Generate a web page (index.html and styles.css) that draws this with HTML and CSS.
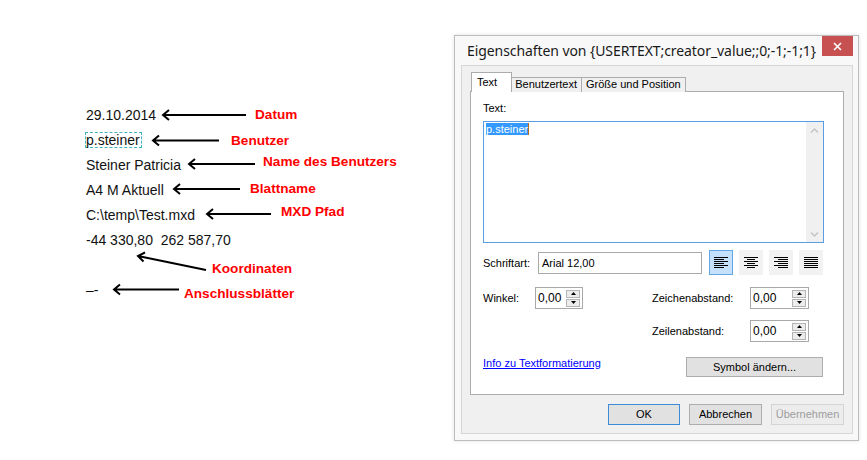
FILE: index.html
```html
<!DOCTYPE html>
<html lang="de">
<head>
  <meta charset="UTF-8">
  <title>Eigenschaften von USERTEXT</title>
  <link rel="stylesheet" href="styles.css">
</head>
<body>
  <div class="page">
    <div class="notes">
      <div class="row">29.10.2014</div>
      <div class="row"><span class="focus">p.steiner</span></div>
      <div class="row">Steiner Patricia</div>
      <div class="row">A4 M Aktuell</div>
      <div class="row">C:\temp\Test.mxd</div>
      <div class="row">-44 330,80&nbsp; 262 587,70</div>
      <div class="row"></div>
      <div class="row">–-</div>

      <svg class="arrows" width="454" height="460" viewBox="0 0 454 460">
        <g fill="none" stroke="#000" stroke-width="2">
          <path d="M246 115H163M169 110l-6 5 6 5"/>
          <path d="M219 140.5H153M159 135.5l-6 5 6 5"/>
          <path d="M255 164H189M195 159l-6 5 6 5"/>
          <path d="M240 189H174M180 184l-6 5 6 5"/>
          <path d="M271 214H207M213 209l-6 5 6 5"/>
          <path d="M206 270L138 256M145 252.5l-7 3.5 5.5 5.5"/>
          <path d="M179 289.5H114M120 284.5l-6 5 6 5"/>
        </g>
      </svg>
      <span class="tag tag-datum">Datum</span>
      <span class="tag tag-user">Benutzer</span>
      <span class="tag tag-name">Name des Benutzers</span>
      <span class="tag tag-sheet">Blattname</span>
      <span class="tag tag-mxd">MXD Pfad</span>
      <span class="tag tag-coords">Koordinaten</span>
      <span class="tag tag-link">Anschlussblätter</span>
    </div>

    <div class="dialog">
      <div class="titlebar">
        <span class="title">Eigenschaften von {USERTEXT;creator_value;;0;-1;-1;1}</span>
        <div class="close">
          <svg width="9" height="9" viewBox="0 0 9 9"><path d="M1 1l7 7M8 1L1 8" stroke="#fff" stroke-width="1.6"/></svg>
        </div>
      </div>
      <div class="client">
        <div class="tabs">
          <div class="tab active">Text</div>
          <div class="tab">Benutzertext</div>
          <div class="tab">Größe und Position</div>
        </div>
        <div class="panel">
          <div class="caption">Text:</div>
          <div class="textbox">
            <div class="textbox-content"><span class="selected">p.steiner</span></div>
            <div class="vscroll">
              <svg width="9" height="5" viewBox="0 0 9 5"><path d="M1 4.5l3.5-3.5 3.5 3.5" fill="none" stroke="#c2c2c2" stroke-width="1.4"/></svg>
              <svg width="9" height="5" viewBox="0 0 9 5"><path d="M1 .5l3.5 3.5 3.5-3.5" fill="none" stroke="#c2c2c2" stroke-width="1.4"/></svg>
            </div>
          </div>

          <div class="font-row">
            <span class="label label-font">Schriftart:</span>
            <div class="field font-field">Arial 12,00</div>
            <div class="align-buttons">
              <div class="align-btn active">
                <svg width="14" height="11" viewBox="0 0 14 11"><path d="M0 .5h14M0 2.5h10M0 4.5h14M0 6.5h10M0 8.5h14M0 10.5h10" stroke="#000"/></svg>
              </div>
              <div class="align-btn">
                <svg width="14" height="11" viewBox="0 0 14 11"><path d="M0 .5h14M3 2.5h8M0 4.5h14M3 6.5h8M0 8.5h14M3 10.5h8" stroke="#000"/></svg>
              </div>
              <div class="align-btn">
                <svg width="14" height="11" viewBox="0 0 14 11"><path d="M0 .5h14M4 2.5h10M0 4.5h14M4 6.5h10M0 8.5h14M4 10.5h10" stroke="#000"/></svg>
              </div>
              <div class="align-btn">
                <svg width="14" height="11" viewBox="0 0 14 11"><path d="M0 .5h14M0 2.5h14M0 4.5h14M0 6.5h14M0 8.5h14M0 10.5h14" stroke="#000"/></svg>
              </div>
            </div>
          </div>

          <div class="spin-row">
            <span class="label label-angle">Winkel:</span>
            <div class="spinner spinner-short">
              <span class="spin-value">0,00</span>
              <div class="spin-buttons">
                <div class="spin-btn"><svg width="5" height="3" viewBox="0 0 5 3"><path d="M0 3h5L2.5 0z"/></svg></div>
                <div class="spin-btn"><svg width="5" height="3" viewBox="0 0 5 3"><path d="M0 0h5L2.5 3z"/></svg></div>
              </div>
            </div>
            <span class="label label-char">Zeichenabstand:</span>
            <div class="spinner">
              <span class="spin-value">0,00</span>
              <div class="spin-buttons">
                <div class="spin-btn"><svg width="5" height="3" viewBox="0 0 5 3"><path d="M0 3h5L2.5 0z"/></svg></div>
                <div class="spin-btn"><svg width="5" height="3" viewBox="0 0 5 3"><path d="M0 0h5L2.5 3z"/></svg></div>
              </div>
            </div>
          </div>

          <div class="spin-row line-row">
            <span class="label label-char">Zeilenabstand:</span>
            <div class="spinner">
              <span class="spin-value">0,00</span>
              <div class="spin-buttons">
                <div class="spin-btn"><svg width="5" height="3" viewBox="0 0 5 3"><path d="M0 3h5L2.5 0z"/></svg></div>
                <div class="spin-btn"><svg width="5" height="3" viewBox="0 0 5 3"><path d="M0 0h5L2.5 3z"/></svg></div>
              </div>
            </div>
          </div>

          <div class="link-row">
            <a class="info-link" href="#">Info zu Textformatierung</a>
            <div class="button symbol-btn">Symbol ändern...</div>
          </div>
        </div>

        <div class="footer">
          <div class="button default">OK</div>
          <div class="button">Abbrechen</div>
          <div class="button disabled">Übernehmen</div>
        </div>
      </div>
    </div>
  </div>
</body>
</html>
```

FILE: styles.css
```css
* {
  box-sizing: border-box;
}
body {
  margin: 0;
  background-color: #fff;
  font-family: 'Liberation Sans', Arial, sans-serif;
}
.page {
  display: flex;
  width: 867px;
  height: 460px;
}

/* left: annotated field values */
.notes {
  position: relative;
  width: 454px;
  padding: 102px 0 0 86px;
  font-size: 14px;
  color: #111;
}
.row {
  height: 25px;
  display: flex;
  align-items: center;
}
.focus {
  line-height: 14px;
  margin-left: -1px;
  padding-right: 1px;
  border: 1px dashed #3fb3c0;
}
.arrows {
  position: absolute;
  top: 0;
  left: 0;
}
.tag {
  position: absolute;
  color: #f00;
  font-weight: bold;
  font-size: 13.6px;
  line-height: 16px;
  white-space: nowrap;
}
.tag-datum { left: 255px; top: 107px; }
.tag-user { left: 231px; top: 133px; }
.tag-name { left: 263px; top: 154px; }
.tag-sheet { left: 250px; top: 181px; }
.tag-mxd { left: 281px; top: 204px; }
.tag-coords { left: 212px; top: 261px; }
.tag-link { left: 184px; top: 286px; }

/* right: properties dialog */
.dialog {
  margin-top: 35px;
  width: 405px;
  height: 406px;
  display: flex;
  flex-direction: column;
  background-color: #f8f8f8;
  border: 1px solid #bdbdbd;
  box-shadow: 0 0 4px rgba(0, 0, 0, 0.12);
}
.titlebar {
  height: 29px;
  display: flex;
  align-items: center;
  padding-left: 12px;
}
.title {
  font-family: 'Noto Sans', 'Open Sans', sans-serif;
  font-size: 14px;
  letter-spacing: -0.08px;
  color: #1a1a1a;
  padding-bottom: 1px;
  white-space: nowrap;
}
.close {
  align-self: flex-start;
  margin-left: auto;
  margin-right: 5px;
  width: 31px;
  height: 20px;
  background-color: #c75050;
  display: flex;
  align-items: center;
  justify-content: center;
}
.client {
  flex: 1;
  margin: 0 5px 6px 6px;
  padding: 7px 8px 6px 8px;
  display: flex;
  flex-direction: column;
  background-color: #f0f0f0;
  border: 1px solid #d6d6d6;
  font-size: 11px;
  color: #000;
}
.tabs {
  height: 19px;
  display: flex;
  align-items: flex-end;
  margin-bottom: -1px;
  padding-left: 1px;
  position: relative;
  z-index: 1;
}
.tab {
  height: 15px;
  line-height: 13px;
  padding: 0 4px;
  border: 1px solid #acacac;
  border-bottom: none;
  background-color: #f0f0f0;
  margin-left: -1px;
}
.tab.active {
  height: 20px;
  line-height: 19px;
  padding: 0 14px 0 5px;
  background-color: #fff;
  margin-left: 0;
  margin-right: -1px;
  position: relative;
  z-index: 1;
}
.panel {
  height: 304px;
  background-color: #fff;
  border: 1px solid #acacac;
  padding: 9px 19px 0 12px;
}
.caption {
  line-height: 14px;
}
.textbox {
  margin-top: 6px;
  height: 122px;
  display: flex;
  border: 1px solid #5b9de2;
}
.textbox-content {
  flex: 1;
  padding-left: 2px;
  line-height: 14px;
}
.selected {
  background-color: #3399ff;
  color: #fff;
  border-right: 1px solid #b56a1a;
}
.vscroll {
  width: 17px;
  background-color: #f0f0f0;
  display: flex;
  flex-direction: column;
  align-items: center;
  justify-content: space-between;
  padding: 6px 0 5px;
}
.label {
  line-height: 14px;
  white-space: nowrap;
}
.font-row {
  margin-top: 7px;
  height: 25px;
  display: flex;
  align-items: center;
}
.label-font {
  width: 55px;
}
.field {
  height: 22px;
  line-height: 20px;
  padding-left: 3px;
  background-color: #fff;
  border: 1px solid #a9a9a9;
}
.font-field {
  width: 164px;
}
.align-buttons {
  display: flex;
  gap: 6px;
  margin-left: 7px;
}
.align-btn {
  width: 24px;
  height: 25px;
  background-color: #f2f2f2;
  display: flex;
  align-items: center;
  justify-content: center;
}
.align-btn.active {
  background-color: #c4e0fa;
  border: 1px solid #62a6e6;
}
.spin-row {
  margin-top: 12px;
  display: flex;
  align-items: center;
}
.line-row {
  margin-top: 11px;
  padding-left: 169px;
}
.label-angle {
  width: 52px;
}
.label-char {
  width: 98px;
}
.spinner {
  width: 59px;
  height: 22px;
  display: flex;
  align-items: center;
  justify-content: space-between;
  padding: 0 2px 0 2px;
  background-color: #fff;
  border: 1px solid #a9a9a9;
}
.spinner-short {
  width: 48px;
  margin-right: 69px;
}
.spin-value {
  font-size: 12px;
}
.spin-buttons {
  display: flex;
  flex-direction: column;
  gap: 1px;
}
.spin-btn {
  width: 14px;
  height: 8px;
  display: flex;
  align-items: center;
  justify-content: center;
  background-color: #ececec;
  border: 1px solid #b4b4b4;
}
.link-row {
  margin-top: 15px;
  display: flex;
  align-items: flex-start;
  justify-content: space-between;
  padding-right: 1px;
}
.info-link {
  color: #0000ff;
  line-height: 14px;
  margin-top: -1px;
}
.button {
  width: 73px;
  height: 21px;
  line-height: 19px;
  text-align: center;
  background-color: #e1e1e1;
  border: 1px solid #adadad;
}
.symbol-btn {
  width: 137px;
  height: 20px;
  line-height: 18px;
}
.footer {
  margin-top: 9px;
  display: flex;
  justify-content: flex-end;
  gap: 9px;
}
.button.default {
  width: 72px;
  border-color: #3c8bd9;
}
.button.disabled {
  color: #9d9d9d;
  background-color: #ececec;
  border-color: #d4d4d4;
}
```
